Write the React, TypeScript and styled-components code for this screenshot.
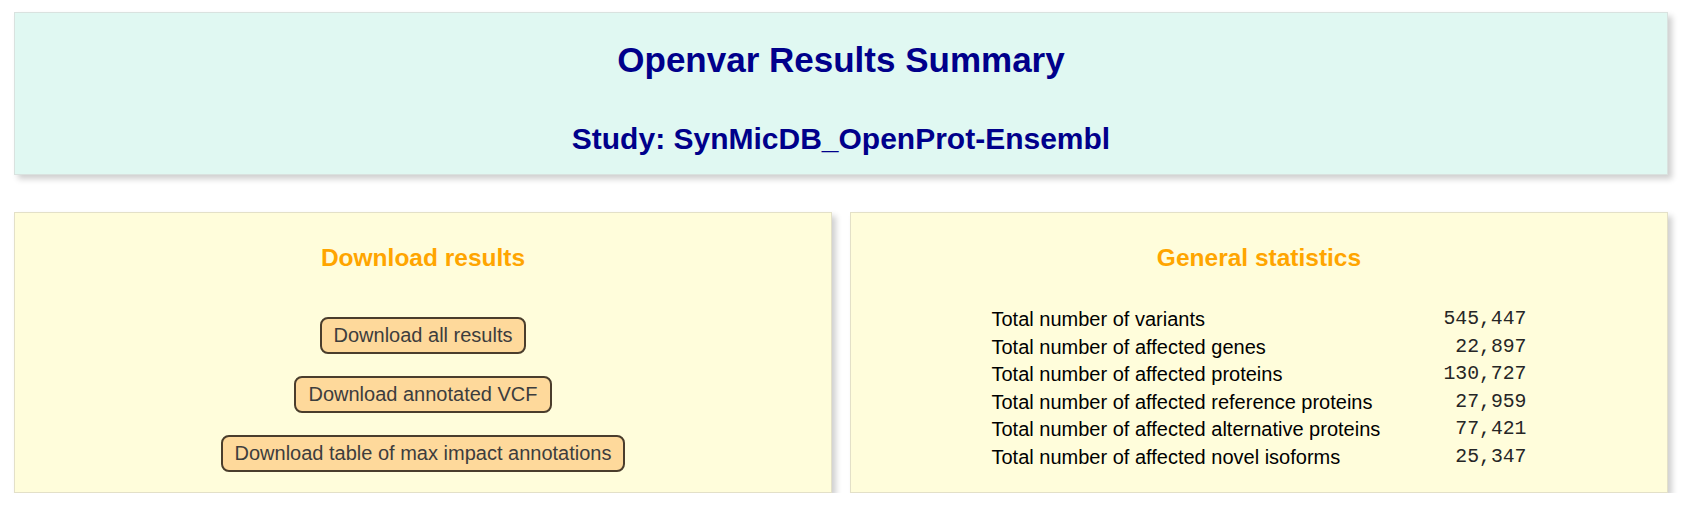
import styled, { createGlobalStyle } from "styled-components";

const GlobalStyle = createGlobalStyle`
  body {
    margin: 0;
    background: #ffffff;
    font-family: "Liberation Sans", Arial, sans-serif;
  }
`;

const Page = styled.div`
  padding: 12px 19px 0 14px;
  display: flex;
  flex-direction: column;
  gap: 37px;
`;

const Header = styled.header`
  height: 163px;
  box-sizing: border-box;
  background: #e0f8f2;
  border: 1px solid #d9e2df;
  box-shadow: 4px 4px 6px #cfcfcf;
  display: flex;
  flex-direction: column;
  align-items: center;
  padding-top: 27px;
  gap: 42px;
  color: #00008b;
`;

const Title = styled.h1`
  margin: 0;
  font-size: 35px;
  line-height: 40px;
  font-weight: bold;
`;

const Subtitle = styled.h2`
  margin: 0;
  font-size: 30px;
  line-height: 34px;
  font-weight: bold;
`;

const Row = styled.div`
  display: grid;
  grid-template-columns: 1fr 1fr;
  gap: 18px;
`;

const Card = styled.section`
  height: 281px;
  box-sizing: border-box;
  background: #fffddb;
  border: 1px solid #e3e0c8;
  box-shadow: 4px 4px 6px #cfcfcf;
  display: flex;
  flex-direction: column;
  align-items: center;
  padding-top: 30px;
`;

const CardTitle = styled.h3`
  margin: 0 0 44px;
  font-size: 24.5px;
  line-height: 30px;
  font-weight: bold;
  color: #ffa500;
`;

const ButtonStack = styled.div`
  display: flex;
  flex-direction: column;
  align-items: center;
  gap: 22px;
`;

const Button = styled.button`
  font-family: "Liberation Sans", Arial, sans-serif;
  font-size: 20px;
  line-height: 23px;
  color: #3d3d3d;
  background: #fed99b;
  border: 2px solid #4a3d2c;
  border-radius: 8px;
  padding: 5px 12px;
  cursor: pointer;
`;

const StatsTable = styled.div`
  width: 535px;
  display: grid;
  grid-template-columns: 1fr auto;
  row-gap: 5.6px;
  margin-top: -9px;
`;

const StatLabel = styled.span`
  font-size: 20px;
  line-height: 22px;
  color: #000000;
`;

const StatValue = styled.span`
  font-family: "Liberation Mono", "Courier New", monospace;
  font-size: 19.8px;
  line-height: 22px;
  color: #262626;
  text-align: right;
`;

const downloads = [
  "Download all results",
  "Download annotated VCF",
  "Download table of max impact annotations",
];

const stats: [string, string][] = [
  ["Total number of variants", "545,447"],
  ["Total number of affected genes", "22,897"],
  ["Total number of affected proteins", "130,727"],
  ["Total number of affected reference proteins", "27,959"],
  ["Total number of affected alternative proteins", "77,421"],
  ["Total number of affected novel isoforms", "25,347"],
];

export default function App() {
  return (
    <>
      <GlobalStyle />
      <Page>
        <Header>
          <Title>Openvar Results Summary</Title>
          <Subtitle>Study: SynMicDB_OpenProt-Ensembl</Subtitle>
        </Header>
        <Row>
          <Card>
            <CardTitle>Download results</CardTitle>
            <ButtonStack>
              {downloads.map((d) => (
                <Button key={d}>{d}</Button>
              ))}
            </ButtonStack>
          </Card>
          <Card>
            <CardTitle>General statistics</CardTitle>
            <StatsTable>
              {stats.map(([label, value]) => (
                <>
                  <StatLabel key={label}>{label}</StatLabel>
                  <StatValue key={label + "v"}>{value}</StatValue>
                </>
              ))}
            </StatsTable>
          </Card>
        </Row>
      </Page>
    </>
  );
}
